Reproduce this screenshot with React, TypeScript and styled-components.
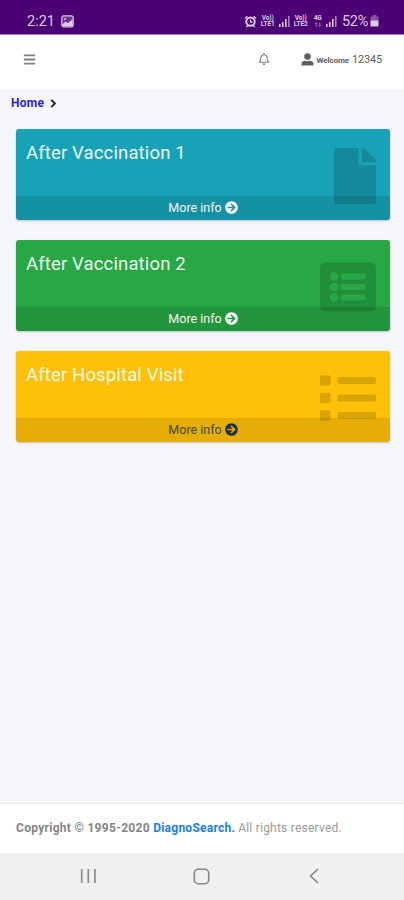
import React from "react";
import styled, { createGlobalStyle } from "styled-components";
import {
  FaArrowCircleRight,
  FaBars,
  FaFile,
  FaList,
  FaListAlt,
  FaRegBell,
} from "react-icons/fa";
import type { IconType } from "react-icons";

const GlobalStyle = createGlobalStyle`
  * { box-sizing: border-box; }
  body { margin: 0; background: #f4f6f9; font-family: Roboto, "Liberation Sans", sans-serif; }
  svg { display: block; flex: none; }
`;

const Screen = styled.div`
  width: 404px;
  height: 900px;
  display: flex;
  flex-direction: column;
  overflow: hidden;
  background: #f4f6f9;
`;

const StatusBar = styled.header`
  height: 35px;
  flex: none;
  display: flex;
  align-items: center;
  justify-content: space-between;
  padding: 8px 25px 0 27px;
  background: #4b0073;
  border-bottom: 1px solid #a078b4;
  color: #dccbe6;
`;

const StatusGroup = styled.div<{ $gap: number }>`
  display: flex;
  align-items: center;
  gap: ${(p) => p.$gap}px;
`;

const StatusText = styled.span<{ $spacing?: number }>`
  font-size: 14.5px;
  line-height: 16px;
  letter-spacing: ${(p) => p.$spacing ?? 0}px;
  padding-top: 2px;
`;

const Network = styled.div<{ $width: number }>`
  width: ${(p) => p.$width}px;
  display: flex;
  flex-direction: column;
  align-items: center;
  font-size: 6.5px;
  font-weight: 700;
  line-height: 6.5px;
  letter-spacing: -0.1px;
  white-space: nowrap;
`;

const TopBar = styled.nav`
  height: 56px;
  flex: none;
  display: flex;
  align-items: center;
  padding: 0 22px 7px 23px;
  background: #fff;
  border-bottom: 1px solid #e6e9ed;
  color: #808080;
`;

const BellSlot = styled.div`
  margin-left: auto;
  margin-right: 31px;
`;

const Account = styled.div`
  display: flex;
  align-items: center;
  color: #606060;
`;

const Welcome = styled.span`
  margin: 3px 3px 0 3px;
  font-size: 8px;
  font-weight: 700;
  line-height: 12px;
  letter-spacing: -0.1px;
`;

const UserId = styled.span`
  font-size: 11px;
  line-height: 14px;
  letter-spacing: -0.2px;
  padding-top: 2px;
`;

const Breadcrumb = styled.div`
  height: 38px;
  flex: none;
  display: flex;
  align-items: flex-start;
  gap: 6px;
  padding: 5px 11px 0;
  color: #222;

  svg { margin-top: 3px; }
`;

const HomeLink = styled.a`
  color: #2d1fe0;
  font-size: 12px;
  font-weight: 700;
  line-height: 15px;
  letter-spacing: 0.3px;
`;

const Cards = styled.main`
  flex: 1;
  display: flex;
  flex-direction: column;
  gap: 20px;
  padding: 0 14px 0 16px;
`;

const Card = styled.section<{ $color: string }>`
  position: relative;
  height: 91px;
  display: flex;
  flex-direction: column;
  justify-content: space-between;
  border-radius: 3px;
  overflow: hidden;
  background: ${(p) => p.$color};
`;

const CardShadow = styled.div`
  border-radius: 3px;
  box-shadow: 0 0 1px rgba(0, 0, 0, 0.15), 0 1px 2px rgba(0, 0, 0, 0.2);
`;

const CardTitle = styled.h3`
  margin: 0;
  padding: 13px 10px 0;
  color: rgba(255, 255, 255, 0.95);
  font-size: 18.5px;
  font-weight: 400;
  line-height: 22px;
  letter-spacing: 0.14px;
`;

const CardIcon = styled.div`
  position: absolute;
  top: 19px;
  right: 14px;
  color: rgba(0, 0, 0, 0.15);
`;

const MoreInfo = styled.a<{ $dark?: boolean }>`
  position: relative;
  height: 24.5px;
  display: flex;
  align-items: center;
  justify-content: center;
  gap: 3px;
  background: rgba(0, 0, 0, 0.1);
  color: ${(p) => (p.$dark ? "#1f2d3d" : "#fff")};
  font-size: 12.5px;
  line-height: 16px;
`;

const MoreLabel = styled.span<{ $dark?: boolean }>`
  opacity: ${(p) => (p.$dark ? 0.8 : 0.95)};
`;

const Footer = styled.footer`
  height: 50px;
  flex: none;
  padding: 17px 16px 0;
  background: #fff;
  border-top: 1px solid #e9ecef;
  color: #999;
  font-size: 12px;
  line-height: 15px;
  white-space: nowrap;
`;

const Copyright = styled.strong`
  color: #858585;
  letter-spacing: 0.29px;
`;

const Company = styled.a`
  color: #1a7cee;
  letter-spacing: 0.25px;
`;

const Rights = styled.span`
  letter-spacing: 0.23px;
`;

const SystemNav = styled.div`
  height: 47px;
  flex: none;
  display: grid;
  grid-template-columns: repeat(3, 113px);
  justify-content: center;
  justify-items: center;
  align-items: center;
  background: #f0f0f0;
  color: #858585;
  padding: 0 2px 1px 0;
`;

const PictureIcon = () => (
  <svg width="13" height="13" viewBox="0 0 13 13">
    <rect x="0.8" y="0.8" width="11.4" height="11" rx="2" fill="#dccbe6" fillOpacity="0.25" stroke="currentColor" strokeWidth="1.2" />
    <path d="M1.5 11V9.2L4.6 6.6L6.8 8.2L11.6 4V11Z" fill="currentColor" />
    <circle cx="4" cy="3.9" r="1" fill="currentColor" />
  </svg>
);

const AlarmIcon = () => (
  <svg width="13" height="13" viewBox="0 0 13 13" fill="none" stroke="currentColor">
    <circle cx="6.5" cy="6.6" r="4.2" strokeWidth="2" />
    <path d="M6.5 4.4V7H8.3M1 3.4L3.4 1.2M9.6 1.2L12 3.4M2.2 12L4 10.2M10.8 12L9 10.2" strokeWidth="1.3" />
  </svg>
);

const SignalIcon = () => (
  <svg width="11" height="11" viewBox="0 0 11 11" fill="currentColor">
    <path d="M0 8H1.6V11H0ZM3 6H4.6V11H3ZM6 3H7.6V11H6Z" />
    <path d="M9 0H10.6V11H9Z" opacity="0.65" />
  </svg>
);

const BatteryIcon = () => (
  <svg width="9" height="12" viewBox="0 0 9 12" fill="currentColor">
    <path d="M2.5 0H6.5V1.5H8.5V6H0.5V1.5H2.5Z" opacity="0.4" />
    <path d="M0.5 5.5H8.5V11.5H0.5Z" />
  </svg>
);

const DataArrows = () => (
  <svg width="8" height="5" viewBox="0 0 8 5" fill="none" stroke="currentColor" opacity="0.6">
    <path d="M2.2 5V0.8M0.8 2L2.2 0.6L3.6 2M5.8 0V4.2M4.4 3L5.8 4.4L7.2 3" strokeWidth="0.9" />
  </svg>
);

const PersonIcon = () => (
  <svg width="13" height="13" viewBox="0 0 13 13" fill="currentColor">
    <circle cx="6.5" cy="3.6" r="3.3" />
    <path d="M0.5 12.5V10.8C0.5 8.8 2.2 7.8 4.1 7.8C5.6 8.4 7.4 8.4 8.9 7.8C10.8 7.8 12.5 8.8 12.5 10.8V12.5Z" />
  </svg>
);

const ChevronIcon = () => (
  <svg width="7" height="9" viewBox="0 0 7 9" fill="none" stroke="currentColor" strokeWidth="1.9">
    <path d="M1.3 0.9L4.9 4.5L1.3 8.1" />
  </svg>
);

const RecentsIcon = () => (
  <svg width="17" height="16" viewBox="0 0 17 16" stroke="currentColor" strokeWidth="1.6">
    <path d="M1.7 1V15M8.3 1V15M14.9 1V15" />
  </svg>
);

const HomeIcon = () => (
  <svg width="17" height="17" viewBox="0 0 17 17" fill="none" stroke="currentColor" strokeWidth="1.6">
    <rect x="1.3" y="1.3" width="14.4" height="14.4" rx="4" />
  </svg>
);

const BackIcon = () => (
  <svg width="10" height="16" viewBox="0 0 10 16" fill="none" stroke="currentColor" strokeWidth="1.6">
    <path d="M9 1L1.6 8L9 15" />
  </svg>
);

const items: { title: string; color: string; icon: IconType; dark?: boolean }[] = [
  { title: "After Vaccination 1", color: "#17a2b8", icon: FaFile },
  { title: "After Vaccination 2", color: "#28a745", icon: FaListAlt },
  { title: "After Hospital Visit", color: "#ffc107", icon: FaList, dark: true },
];

export default function App() {
  return (
    <>
      <GlobalStyle />
      <Screen>
        <StatusBar>
          <StatusGroup $gap={6}>
            <StatusText>2:21</StatusText>
            <PictureIcon />
          </StatusGroup>
          <StatusGroup $gap={2}>
            <AlarmIcon />
            <Network $width={18}>
              <span>Vo))</span>
              <span>LTE1</span>
            </Network>
            <SignalIcon />
            <Network $width={18}>
              <span>Vo))</span>
              <span>LTE2</span>
            </Network>
            <Network $width={12}>
              <span>4G</span>
              <DataArrows />
            </Network>
            <SignalIcon />
            <StatusText $spacing={-0.3}>&nbsp;52%</StatusText>
            <BatteryIcon />
          </StatusGroup>
        </StatusBar>

        <TopBar>
          <FaBars size={13} />
          <BellSlot>
            <FaRegBell size={12} />
          </BellSlot>
          <Account>
            <PersonIcon />
            <Welcome>Welcome</Welcome>
            <UserId>12345</UserId>
          </Account>
        </TopBar>

        <Breadcrumb>
          <HomeLink>Home</HomeLink>
          <ChevronIcon />
        </Breadcrumb>

        <Cards>
          {items.map(({ title, color, icon: Icon, dark }) => (
            <CardShadow key={title}>
              <Card $color={color}>
                <CardTitle>{title}</CardTitle>
                <CardIcon>
                  <Icon size={56} preserveAspectRatio="xMaxYMid meet" />
                </CardIcon>
                <MoreInfo $dark={dark}>
                  <MoreLabel $dark={dark}>More info</MoreLabel>
                  <FaArrowCircleRight size={13} />
                </MoreInfo>
              </Card>
            </CardShadow>
          ))}
        </Cards>

        <Footer>
          <Copyright>
            Copyright © 1995-2020 <Company>DiagnoSearch.</Company>
          </Copyright>{" "}
          <Rights>All rights reserved.</Rights>
        </Footer>

        <SystemNav>
          <RecentsIcon />
          <HomeIcon />
          <BackIcon />
        </SystemNav>
      </Screen>
    </>
  );
}
